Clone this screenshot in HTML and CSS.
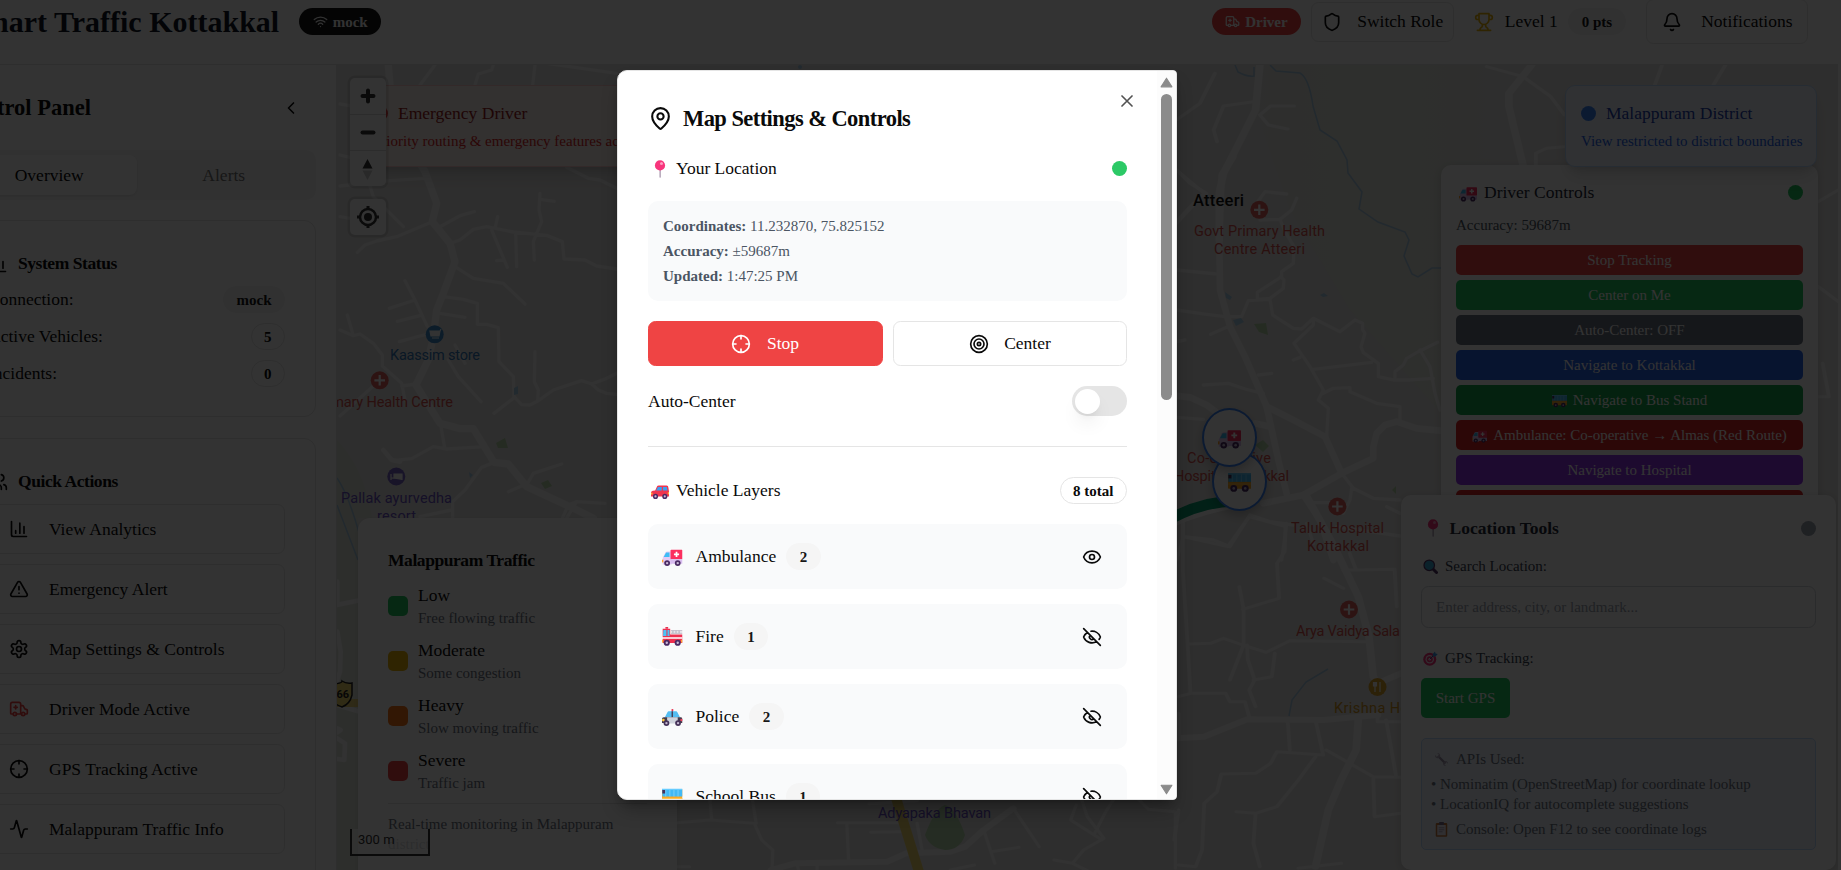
FILE: index.html
```html
<!DOCTYPE html>
<html lang="en">
<head>
<meta charset="utf-8">
<title>Smart Traffic Kottakkal</title>
<link rel="stylesheet" href="styles.css">
</head>
<body>
<svg class="defs" aria-hidden="true">
  <symbol id="e-pin" viewBox="0 0 60 60"><rect x="28" y="26" width="5" height="33" rx="2" fill="#b4a5b8"/><circle cx="30" cy="18" r="17" fill="#f8357c"/><circle cx="35" cy="12" r="5" fill="#ff9ac0"/></symbol>
  <symbol id="e-ambulance" viewBox="0 0 60 60"><path d="M2 52V35L10 19Q12 16 16 16H28V54H2Z" fill="#e3c9f5"/><path d="M5 32L12 19H22V32Z" fill="#3dbdf5"/><rect x="25" y="11" width="35" height="28" rx="2" fill="#fb2f5f"/><path d="M25 39H60V52H25Z" fill="#d9bdf0"/><path d="M40 17h5v5h5v5h-5v5h-5v-5h-5v-5h5z" fill="#fff"/><rect x="0" y="40" width="4" height="8" fill="#ffa42e"/><g fill="#4a2a63"><circle cx="15" cy="50" r="8.500"/><circle cx="46" cy="50" r="8.500"/></g><g fill="#c9b8d6"><circle cx="15" cy="50" r="3.500"/><circle cx="46" cy="50" r="3.500"/></g></symbol>
  <symbol id="e-fire" viewBox="0 0 60 60"><path d="M10 3h8v5h-8z" fill="#e73350"/><path d="M2 8H24V25H60V50H2Z" fill="#ee2f4f"/><path d="M4 12H13V29H3ZM16 12H22V29H16Z" fill="#4cc3f7"/><path d="M0 33H60V37H0Z" fill="#fff"/><path d="M26 14H60M26 21H60M32 14V21M41 14V21M50 14V21" stroke="#a9a1b3" stroke-width="2.5"/><path d="M0 40h4v8H0zM56 40h4v8h-4z" fill="#ffb02e"/><g fill="#4a2a63"><circle cx="14" cy="49" r="9"/><circle cx="46" cy="49" r="9"/></g><g fill="#c9b8d6"><circle cx="14" cy="49" r="3.5"/><circle cx="46" cy="49" r="3.5"/></g></symbol>
  <symbol id="e-police" viewBox="0 0 60 60"><rect x="28" y="9" width="5" height="7" fill="#e73350"/><path d="M8 34L16 18Q17 15 20 15H41Q44 15 45 18L53 34Z" fill="#54bdf2"/><path d="M28 15h4v20h-4z" fill="#453b4f"/><path d="M0 38Q0 33 5 33H55Q60 33 60 39V50H0Z" fill="#443c4d"/><path d="M15 33H46V51H15Z" fill="#cfd3dc"/><circle cx="4" cy="41" r="4" fill="#ffc83d"/><circle cx="57" cy="41" r="3.5" fill="#f0405c"/><g fill="#453258"><circle cx="13" cy="50" r="8.500"/><circle cx="47" cy="50" r="8.500"/></g><g fill="#c3b6cf"><circle cx="13" cy="50" r="3.5"/><circle cx="47" cy="50" r="3.5"/></g></symbol>
  <symbol id="e-bus" viewBox="0 0 60 60"><path d="M0 10H60V49H2Q0 49 0 45Z" fill="#f9a825"/><path d="M1 10H60V31H1Z" fill="#41b9f5"/><path d="M11 10V31M23 10V31M35 10V31M47 10V31" stroke="#8fd8fb" stroke-width="2"/><path d="M1 12H9V22H1Z" fill="#46315c"/><path d="M0 8H60V12H0Z" fill="#66ccff"/><path d="M0 35H60V38H0Z" fill="#ffc24a"/><g fill="#4a2a63"><circle cx="15" cy="48" r="9"/><circle cx="45" cy="48" r="9"/></g><g fill="#c9b8d6"><circle cx="15" cy="48" r="3.5"/><circle cx="45" cy="48" r="3.5"/></g></symbol>
  <symbol id="e-car" viewBox="0 0 60 60"><path d="M0 36Q0 30 6 29L14 28L20 15Q21 12 26 12H52Q58 12 58 19L60 32V48H0Z" fill="#f0354f"/><path d="M17 28L23 17H36V28ZM40 17H53L55 28H40Z" fill="#3d9ff0"/><path d="M0 36h5v6H0zM56 34h4v7h-4z" fill="#ffb62e"/><g fill="#4a2a63"><circle cx="15" cy="48" r="8.500"/><circle cx="46" cy="48" r="8.500"/></g><g fill="#c9b8d6"><circle cx="15" cy="48" r="3.5"/><circle cx="46" cy="48" r="3.5"/></g></symbol>
  <symbol id="e-search" viewBox="0 0 60 60"><path d="M39 39L54 54" stroke="#533566" stroke-width="12" stroke-linecap="round"/><circle cx="25" cy="25" r="21" fill="#38a9d8" stroke="#533566" stroke-width="5"/></symbol>
  <symbol id="e-target" viewBox="0 0 60 60"><circle cx="27" cy="33" r="26" fill="#f8357c"/><circle cx="27" cy="33" r="17" fill="#f4e8f2"/><circle cx="27" cy="33" r="12" fill="#f8357c"/><circle cx="27" cy="33" r="5" fill="#fff"/><path d="M27 33L44 16" stroke="#2e5f9e" stroke-width="4"/><path d="M39 12L48 2L50 10L59 12L50 22H40Z" fill="#3c9be8"/></symbol>
  <symbol id="e-wrench" viewBox="0 0 60 60"><path d="M16 16L46 46" stroke="#9d92a8" stroke-width="9"/><path d="M4 12L12 20L20 12L13 4Q24 3 25 14Q23 26 12 25Q3 22 4 12M56 47L48 40L41 48L48 56Q37 56 36 46Q38 35 49 36Q57 39 56 47" fill="#b5abc0"/></symbol>
  <symbol id="e-clip" viewBox="0 0 60 60"><rect x="7" y="4" width="46" height="55" rx="4" fill="#c87a3f"/><rect x="13" y="12" width="34" height="41" fill="#efe9f3"/><rect x="20" y="0" width="20" height="12" rx="3" fill="#7d718b"/><path d="M19 23H41M19 31H41M19 39H34" stroke="#9c90a8" stroke-width="3"/></symbol>

  <symbol id="i-wifi" viewBox="0 0 24 24"><path d="M12 20h.01M2 8.82a15 15 0 0 1 20 0M5 12.859a10 10 0 0 1 14 0M8.5 16.429a5 5 0 0 1 7 0"/></symbol>
  <symbol id="i-amb" viewBox="0 0 24 24"><path d="M10 10H6M14 18V6a2 2 0 0 0-2-2H4a2 2 0 0 0-2 2v11a1 1 0 0 0 1 1h2M19 18h2a1 1 0 0 0 1-1v-3.28a1 1 0 0 0-.684-.948l-1.923-.641a1 1 0 0 1-.578-.502l-1.539-3.076A1 1 0 0 0 16.382 8H14M8 8v4M9 18h6"/><circle cx="17" cy="18" r="2"/><circle cx="7" cy="18" r="2"/></symbol>
  <symbol id="i-shield" viewBox="0 0 24 24"><path d="M20 13c0 5-3.5 7.5-7.66 8.95a1 1 0 0 1-.67-.01C7.5 20.5 4 18 4 13V6a1 1 0 0 1 1-1c2 0 4.5-1.2 6.24-2.72a1.17 1.17 0 0 1 1.52 0C14.51 3.81 17 5 19 5a1 1 0 0 1 1 1z"/></symbol>
  <symbol id="i-trophy" viewBox="0 0 24 24"><path d="M6 9H4.5a2.500 2.500 0 0 1 0-5H6M18 9h1.500a2.500 2.500 0 0 0 0-5H18M4 22h16M10 14.660V17c0 .55-.47.98-.97 1.210C7.850 18.750 7 20.240 7 22M14 14.660V17c0 .55.47.98.97 1.210C16.150 18.750 17 20.240 17 22M18 2H6v7a6 6 0 0 0 12 0V2Z"/></symbol>
  <symbol id="i-bell" viewBox="0 0 24 24"><path d="M10.268 21a2 2 0 0 0 3.464 0M3.262 15.326A1 1 0 0 0 4 17h16a1 1 0 0 0 .74-1.673C19.410 13.956 18 12.499 18 8A6 6 0 0 0 6 8c0 4.499-1.411 5.956-2.738 7.326"/></symbol>
  <symbol id="i-left" viewBox="0 0 24 24"><path d="m15 18-6-6 6-6"/></symbol>
  <symbol id="i-chart" viewBox="0 0 24 24"><path d="M3 3v16a2 2 0 0 0 2 2h16M18 17V9M13 17V5M8 17v-3"/></symbol>
  <symbol id="i-users" viewBox="0 0 24 24"><path d="M16 21v-2a4 4 0 0 0-4-4H6a4 4 0 0 0-4 4v2M22 21v-2a4 4 0 0 0-3-3.870M16 3.130a4 4 0 0 1 0 7.750"/><circle cx="9" cy="7" r="4"/></symbol>
  <symbol id="i-alert" viewBox="0 0 24 24"><path d="m21.730 18-8-14a2 2 0 0 0-3.480 0l-8 14A2 2 0 0 0 4 21h16a2 2 0 0 0 1.730-3M12 9v4M12 17h.01"/></symbol>
  <symbol id="i-gear" viewBox="0 0 24 24"><path d="M12.220 2h-.44a2 2 0 0 0-2 2v.18a2 2 0 0 1-1 1.730l-.43.25a2 2 0 0 1-2 0l-.15-.08a2 2 0 0 0-2.730.73l-.22.38a2 2 0 0 0 .73 2.730l.15.1a2 2 0 0 1 1 1.720v.51a2 2 0 0 1-1 1.740l-.15.09a2 2 0 0 0-.73 2.730l.22.38a2 2 0 0 0 2.730.73l.15-.08a2 2 0 0 1 2 0l.43.25a2 2 0 0 1 1 1.730V20a2 2 0 0 0 2 2h.44a2 2 0 0 0 2-2v-.18a2 2 0 0 1 1-1.730l.43-.25a2 2 0 0 1 2 0l.15.08a2 2 0 0 0 2.730-.73l.22-.39a2 2 0 0 0-.73-2.730l-.15-.08a2 2 0 0 1-1-1.740v-.5a2 2 0 0 1 1-1.740l.15-.09a2 2 0 0 0 .73-2.730l-.22-.38a2 2 0 0 0-2.730-.73l-.15.08a2 2 0 0 1-2 0l-.43-.25a2 2 0 0 1-1-1.730V4a2 2 0 0 0-2-2z"/><circle cx="12" cy="12" r="3"/></symbol>
  <symbol id="i-cross" viewBox="0 0 24 24"><circle cx="12" cy="12" r="10"/><path d="M22 12h-4M6 12H2M12 6V2M12 22v-4"/></symbol>
  <symbol id="i-pulse" viewBox="0 0 24 24"><path d="M22 12h-2.480a2 2 0 0 0-1.930 1.460l-2.350 8.360a.25.25 0 0 1-.48 0L9.240 2.180a.25.25 0 0 0-.48 0l-2.350 8.360A2 2 0 0 1 4.490 12H2"/></symbol>
  <symbol id="i-mappin" viewBox="0 0 24 24"><path d="M20 10c0 4.993-5.539 10.193-7.399 11.799a1 1 0 0 1-1.202 0C9.539 20.193 4 14.993 4 10a8 8 0 0 1 16 0"/><circle cx="12" cy="10" r="3"/></symbol>
  <symbol id="i-target" viewBox="0 0 24 24"><circle cx="12" cy="12" r="10"/><circle cx="12" cy="12" r="6"/><circle cx="12" cy="12" r="2"/></symbol>
  <symbol id="i-eye" viewBox="0 0 24 24"><path d="M2.062 12.348a1 1 0 0 1 0-.696 10.750 10.750 0 0 1 19.876 0 1 1 0 0 1 0 .696 10.750 10.750 0 0 1-19.876 0"/><circle cx="12" cy="12" r="3"/></symbol>
  <symbol id="i-eyeoff" viewBox="0 0 24 24"><path d="M10.733 5.076a10.744 10.744 0 0 1 11.205 6.575 1 1 0 0 1 0 .696 10.747 10.747 0 0 1-1.444 2.490M14.084 14.158a3 3 0 0 1-4.242-4.242M17.479 17.499a10.750 10.750 0 0 1-15.417-5.151 1 1 0 0 1 0-.696 10.750 10.750 0 0 1 4.446-5.143M2 2l20 20"/></symbol>
  <symbol id="i-x" viewBox="0 0 24 24"><path d="M18 6 6 18M6 6l12 12"/></symbol>
</svg>

<div class="app">
  <header class="top">
    <div class="brand">
      <h1>Smart Traffic Kottakkal</h1>
      <span class="badge dark"><svg class="ic xs"><use href="#i-wifi"/></svg>mock</span>
    </div>
    <div class="top-right">
      <div class="role">
        <span class="badge red"><svg class="ic xs"><use href="#i-amb"/></svg>Driver</span>
        <button class="btn sw"><svg class="ic"><use href="#i-shield"/></svg>Switch Role</button>
      </div>
      <div class="level"><svg class="ic gold"><use href="#i-trophy"/></svg><span class="lvl">Level 1</span><span class="badge soft">0 pts</span></div>
      <button class="btn notif"><svg class="ic"><use href="#i-bell"/></svg>Notifications</button>
    </div>
  </header>

  <div class="main">
    <aside class="side">
      <div class="side-head"><h2>Control Panel</h2><svg class="ic"><use href="#i-left"/></svg></div>
      <div class="tabs"><span class="tab on">Overview</span><span class="tab">Alerts</span></div>
      <section class="card">
        <h3><svg class="ic"><use href="#i-chart"/></svg>System Status</h3>
        <div class="stat"><span>Connection:</span><span class="badge soft">mock</span></div>
        <div class="stat"><span>Active Vehicles:</span><span class="badge line">5</span></div>
        <div class="stat"><span>Incidents:</span><span class="badge line">0</span></div>
      </section>
      <section class="card">
        <h3><svg class="ic"><use href="#i-users"/></svg>Quick Actions</h3>
        <div class="acts">
          <button class="act"><svg class="ic"><use href="#i-chart"/></svg>View Analytics</button>
          <button class="act"><svg class="ic"><use href="#i-alert"/></svg>Emergency Alert</button>
          <button class="act"><svg class="ic"><use href="#i-gear"/></svg>Map Settings &amp; Controls</button>
          <button class="act"><svg class="ic crimson"><use href="#i-amb"/></svg>Driver Mode Active</button>
          <button class="act"><svg class="ic"><use href="#i-cross"/></svg>GPS Tracking Active</button>
          <button class="act"><svg class="ic"><use href="#i-pulse"/></svg>Malappuram Traffic Info</button>
        </div>
      </section>
    </aside>

    <div class="map">
      <svg class="canvas" viewBox="337 65 1501 805" width="1501" height="805">
        <defs>
          <linearGradient id="park" x1="0" x2="1"><stop offset="0" stop-color="#e4e8de" stop-opacity="0"/><stop offset=".35" stop-color="#e4e8de"/><stop offset=".7" stop-color="#e4e8de"/><stop offset="1" stop-color="#e4e8de" stop-opacity="0"/></linearGradient>
        </defs>
        <path d="M1240 65H1500V480L1350 310L1290 210Z" fill="url(#park)"/>
        <path d="M337 440Q365 470 372 518H358V870H337Z" fill="#e0e6dc"/>
        <g class="roads" transform="translate(340 60) scale(.33333)">
          <g stroke-width="22"><path d="M144 5L150 75L190 230L255 335L290 430L277 485L330 550L345 605L310 700L290 750L280 830L265 900L228 975L300 1090L360 1106L400 1106L462 1207L505 1212L560 1280L700 1345L760 1375"/></g>
          <g stroke-width="10">
            <path d="M285 15L240 75M460 15L455 30L415 42L405 75M585 15L578 75M620 10L830 40"/>
            <path d="M0 378L55 372L150 362L255 355M90 378L100 410L190 500M52 577L75 555L110 543L170 530L277 485M300 500L360 467L403 455M330 550L360 540L400 508L440 500L520 516L620 526L667 545L672 597L735 600L770 618L830 627M455 510L502 622M473 470L465 505M470 602L490 600M600 400L597 450L605 485L590 520L580 545L583 600M600 418L643 424M527 520L530 620M345 620L400 655L490 670L555 732M310 710L370 718L412 730L412 793L440 793L475 803L477 905L520 950L522 1010L545 1034L570 1035L595 1022L640 990L725 962L755 972L800 955L830 940M585 875L583 965L595 990L593 1022M755 972L775 990L800 1000L830 1003M520 1015L462 1060M195 662L225 720L148 745M225 720L262 800M240 767L172 784M300 760L375 772M262 822L178 845M325 900L355 950L423 1025M345 855L375 910M0 810L40 827L60 822L100 850L127 885L127 918L185 970L195 1020M22 765L40 827M185 978L228 972M0 1068L120 960M302 1095L314 1163M130 1170L158 1202L215 1196L280 1160L320 1167L435 1160M455 1210L425 1222L375 1290L338 1325V1372M560 1275L580 1240L665 1212M505 1295L552 1275M668 1372L685 1335L710 1325L795 1330M640 1440L710 1325M680 322L745 355L780 360L830 385M0 132L30 137M0 285L30 292M0 470L30 475"/>
            <path d="M240 1370L335 1350"/>
          </g>
        </g>
        <g class="roads" transform="translate(0 435) scale(.33333)" stroke-width="14"><path d="M1150 45L1175 75L1200 80M1011 510L1072 497M1012 440V505M1012 590L1022 650L1020 710L1010 740M1011 810L1072 828M1012 910L1035 925L1033 975L1012 972M1012 880L1022 885L1012 892"/></g>
        <g class="roads" transform="translate(1170 160) scale(.33333)">
          <g stroke-width="20"><path d="M190 -10L155 45L148 240L150 390L180 500L225 590L290 740L325 900L350 1000"/><path d="M0 705L60 712L110 735L150 765M290 740L370 780L465 830L515 940M255 790L300 800M280 1030L400 1005L515 940L610 895V860L620 820L645 795L680 785L740 805L810 812M400 1005L450 1080L490 1200"/></g>
          <g stroke-width="10"><path d="M20 30L60 70L110 100M0 205L70 130M260 130L285 95L350 102M380 115L365 150L330 178L270 180M330 178L345 215L372 260L370 310L335 335V350L262 397V418L300 415L340 385L342 360L332 350M20 330L140 342M20 450L110 463L165 470H215L235 422L300 418L308 465L370 505L395 507L430 475L510 515L555 480L578 490V510L585 520L573 560L580 578L625 610V650L670 660H715L790 655M430 478V495L372 550L420 620L460 690L445 720L475 745L470 830M370 600L390 592M430 628L605 607M122 523L180 497M20 545L45 540M265 645L305 640M100 675L175 670L235 690L280 700M20 772L100 778M460 700L490 685L540 683V695L620 730L690 740V785M675 655V635L700 615L710 595L745 575L803 547M750 570L780 620L795 700L810 750M515 940L550 985L610 1015L690 1020M545 985L540 1020L520 1060M430 1028H490M650 1040L690 1060M350 1090L335 1200M240 1065L180 1160L130 1140L40 1130V1090M240 1065L300 1085L370 1095M40 1130L20 1200M410 1090L430 1150M500 1100L690 1128"/></g>
        </g>
        <g class="roads" transform="translate(1170 0) scale(.4279 .33333)">
          <g stroke-width="18"><path d="M210 195L200 330L165 420L125 520L115 580V720M845 195L792 280V320L825 495"/></g>
          <g stroke-width="9"><path d="M105 220L70 310L15 360M195 305L125 318L102 390L110 425M210 345L235 318H290M210 345L230 375L275 387M740 200L825 230L890 290L922 345M1150 195L1133 255M1298 195L1270 255M855 495V460L880 445L922 440M15 510L80 580L15 670M1515 605L1562 570M1515 860L1562 905M1525 1090L1540 1190H1515"/></g>
        </g>
        <g class="roads" transform="translate(1170 490) scale(.4279 .33333)">
          <g stroke-width="18"><path d="M320 20L380 160L440 320L465 440L475 560L485 580M15 745L80 740L180 688L360 690L485 675M485 580L540 550M440 690L435 780L400 870L370 960L340 1130"/></g>
          <g stroke-width="9"><path d="M30 95V240L40 440L48 610L20 620M30 140L135 170L185 80L270 110L268 185L250 220L255 325L170 358M162 290L172 358V465L140 570M45 462L95 460L125 445L170 465L225 487L280 452L460 455M180 465L182 510L198 570L185 600L200 650M245 490L238 560L195 570M48 610H130L140 635H175L185 680M275 690L280 780M340 690L358 795L250 785L235 820L200 850L120 852L110 905L80 940L75 1080L60 1130L20 1125M340 800L300 870L250 950L200 970L155 965M200 970L195 1060L210 1130M365 780L475 860L540 862M475 860L478 980L540 970M505 690L528 855M405 240L435 240L525 238L530 350M360 265L405 295M420 190L435 240M485 685V695H540M20 740V670M20 960L10 1050M300 1135L400 1120"/></g>
        </g>
        <g class="roads" transform="translate(610 450) scale(.37 .33333)">
          <g stroke-width="18"><path d="M435 1260L500 1240L750 1235L800 1210L920 1205L960 1190L1010 1140L1090 1075"/></g>
          <g stroke-width="9"><path d="M180 1118L270 1110L390 1120L410 1170L440 1200L438 1260M270 1050L275 1110M385 1050L395 1120M615 1118H800M640 1118L645 1235M705 1147L785 1145M830 1120L845 1210M1090 1075L1160 1190M1010 1140L1040 1240M1030 1205L1105 1192M1275 1050L1290 1100L1335 1165L1280 1200L1250 1240L1200 1230M1260 1065L1245 1110L1330 1170M1360 1050L1340 1085L1310 1150M1430 1050L1455 1078L1528 1085V1255M1250 1240L1290 1262M180 1250H215M920 1260L985 1245M505 1240L510 1262M560 1240V1262M700 1062L830 1052"/></g>
        </g>
        <path d="M896 798L919 872" stroke="#f1d76c" stroke-width="10" fill="none"/>
        <path d="M925 835Q935 808 945 805Q956 808 965 835Q960 850 945 850Q930 848 925 835Z" fill="#b9dcae"/>
        <path d="M337 703H358" stroke="#e9cf72" stroke-width="8"/>
        <g fill="#b7d8ac"><path d="M496 443L505 438L508 448L498 448ZM541 483L548 480L552 486L545 489ZM1254 324L1266 323L1268 335L1259 332ZM1392 490l4-4v8zM1255 445l8-5 6 6-6 6z"/></g>
        <g fill="#a9d0ec"><path d="M514 388l4-2v8l-4 1zM469 472l4 3-3 3zM1225 292l7 5-2 3-4-2zM1233 320l8-2 3 4-8 4zM1320 295l4-2 4 3-5 1z"/><circle cx="800" cy="67" r="2"/></g>
        <g fill="none" stroke="#a9cbe6" stroke-width="1.500"><path d="M337 478Q352 500 366 560M337 505L358 560M1235 65L1238 72Q1247 77 1254 76V67M1270 65L1276 71L1300 73Q1309 78 1313 106L1320 130L1337 141L1347 160L1348 173L1362 192L1359 209L1378 222L1405 232L1409 240L1404 256L1412 274L1418 277L1432 268L1441 268M1328 669L1306 682L1292 700L1289 716"/></g>
        <path d="M1170 520Q1205 505 1240 500" stroke="#fff" stroke-width="15" fill="none"/>
        <path d="M1170 519Q1205 500 1240 501" stroke="#0aa173" stroke-width="11" fill="none"/>
        <g class="dots">
          <g fill="#e0605c"><circle cx="379.700" cy="380.300" r="9"/><circle cx="1259.300" cy="209.800" r="9"/><circle cx="1337.400" cy="506.500" r="9"/><circle cx="1349" cy="609.500" r="9"/></g>
          <circle cx="434.700" cy="334.300" r="9" fill="#3f8ccc"/><circle cx="396.300" cy="476.500" r="9" fill="#7a66c8"/><circle cx="1377.500" cy="687" r="9" fill="#dca32c"/>
          <path d="M379.700 375v10.600M374.400 380.300H385M1259.300 204.500v10.600M1254 209.800h10.600M1337.400 501.200v10.600M1332.100 506.500h10.600M1349 604.200v10.600M1343.700 609.500h10.600" stroke="#fff" stroke-width="2.200"/>
          <path d="M430 331h10l-1 5h-8zM432 338h7M440 331l1-2M1375 682v10M1380 682v10M1373.500 682v4h3v-4M391 474v6M391 478h11v2M394 474h8v4h-8z" fill="#fff" stroke="#fff" stroke-width="1.200"/>
        </g>
        <g class="poi">
          <g fill="#d8524d"><text x="453" y="407" text-anchor="end" textLength="139">Primary Health Centre</text><text x="1194" y="236" textLength="131">Govt Primary Health</text><text x="1214" y="254" textLength="91">Centre Atteeri</text><text x="1187" y="463" textLength="84">Co-operative</text><text x="1174" y="481" textLength="115">Hospital Kottakkal</text><text x="1291" y="533" textLength="93">Taluk Hospital</text><text x="1307" y="551" textLength="62">Kottakkal</text><text x="1296" y="636" textLength="104">Arya Vaidya Sala</text></g>
          <text x="390" y="360" textLength="90" fill="#3278ba">Kaassim store</text>
          <g fill="#6a51c4"><text x="341" y="503" textLength="111">Pallak ayurvedha</text><text x="377" y="521" textLength="39">resort</text><text x="878" y="818" textLength="113">Adyapaka Bhavan</text></g>
          <text x="1334" y="713" textLength="92" fill="#d0951f">Krishna Hotel</text>
          <text class="place" x="1193" y="206" textLength="51">Atteeri</text>
        </g>
        <path d="M330 684Q342 684 342 681Q346 684 352 683V695Q350 704 342 707Q334 704 331 700Z" fill="#f1d76c" stroke="#222" stroke-width="1.500"/>
        <text class="shield" x="336.500" y="698">66</text>
      </svg>

      <div class="marker bus"><svg><use href="#e-bus"/></svg></div>
      <div class="marker amb"><svg><use href="#e-ambulance"/></svg></div>

      <div class="note driver"><div class="note-t"><i class="dot"></i>Emergency Driver</div><p>Priority routing &amp; emergency features activated</p></div>

      <div class="ctl zoom">
        <span><svg viewBox="0 0 36 36"><path d="M18 12.500v11M12.500 18h11" stroke="#333" stroke-width="4" stroke-linecap="round"/></svg></span>
        <span><svg viewBox="0 0 36 36"><path d="M12.500 17.500h11" stroke="#333" stroke-width="4" stroke-linecap="round"/></svg></span>
        <span><svg viewBox="0 0 36 36"><path d="M17.500 8L22.500 17.500h-10z" fill="#333"/><path d="M17.500 29L22.500 19.500h-10z" fill="#ccc"/></svg></span>
      </div>
      <div class="ctl locate"><span><svg viewBox="0 0 36 36"><circle cx="18" cy="18" r="8" fill="none" stroke="#333" stroke-width="2.500"/><circle cx="18" cy="18" r="4" fill="#333"/><path d="M18 7v3M18 26v3M7 18h3M26 18h3" stroke="#333" stroke-width="3"/></svg></span></div>

      <div class="legend">
        <h3>Malappuram Traffic</h3>
        <div class="lv"><i class="g"></i><div><b>Low</b><small>Free flowing traffic</small></div></div>
        <div class="lv"><i class="y"></i><div><b>Moderate</b><small>Some congestion</small></div></div>
        <div class="lv"><i class="o"></i><div><b>Heavy</b><small>Slow moving traffic</small></div></div>
        <div class="lv"><i class="r"></i><div><b>Severe</b><small>Traffic jam</small></div></div>
        <p>Real-time monitoring in Malappuram district</p>
      </div>
      <div class="scale">300 m</div>

      <div class="drive">
        <div class="drive-h"><svg><use href="#e-ambulance"/></svg><span>Driver Controls</span><i class="dot"></i></div>
        <p>Accuracy: 59687m</p>
        <div class="drive-b">
          <button class="c-red">Stop Tracking</button>
          <button class="c-green">Center on Me</button>
          <button class="c-gray">Auto-Center: OFF</button>
          <button class="c-blue">Navigate to Kottakkal</button>
          <button class="c-green2"><svg><use href="#e-bus"/></svg>Navigate to Bus Stand</button>
          <button class="c-red2"><svg><use href="#e-ambulance"/></svg>Ambulance: Co-operative → Almas (Red Route)</button>
          <button class="c-purple">Navigate to Hospital</button>
          <button class="c-red2"></button>
        </div>
      </div>
      <div class="note district"><div class="note-t"><i class="dot"></i>Malappuram District</div><p>View restricted to district boundaries</p></div>

      <div class="tools">
        <div class="tools-h"><svg><use href="#e-pin"/></svg><b>Location Tools</b><i class="dot"></i></div>
        <div class="lab"><svg><use href="#e-search"/></svg>Search Location:</div>
        <div class="field">Enter address, city, or landmark...</div>
        <div class="lab second"><svg><use href="#e-target"/></svg>GPS Tracking:</div>
        <button class="gps">Start GPS</button>
        <div class="apis">
          <div class="em"><svg><use href="#e-wrench"/></svg>APIs Used:</div>
          <div>• Nominatim (OpenStreetMap) for coordinate lookup</div>
          <div>• LocationIQ for autocomplete suggestions</div>
          <div class="em last"><svg><use href="#e-clip"/></svg>Console: Open F12 to see coordinate logs</div>
        </div>
      </div>
    </div>
  </div>
</div>

<div class="overlay"></div>

<div class="dialog" role="dialog">
  <div class="dlg-body">
    <h2><svg class="ic lg"><use href="#i-mappin"/></svg>Map Settings &amp; Controls</h2>
    <svg class="ic close"><use href="#i-x"/></svg>
    <div class="row loc"><span class="emo"><svg><use href="#e-pin"/></svg>Your Location</span><i class="dot"></i></div>
    <div class="info">
      <div><b>Coordinates:</b> 11.232870, 75.825152</div>
      <div><b>Accuracy:</b> ±59687m</div>
      <div><b>Updated:</b> 1:47:25 PM</div>
    </div>
    <div class="pair">
      <button class="stop"><svg class="ic"><use href="#i-cross"/></svg>Stop</button>
      <button><svg class="ic"><use href="#i-target"/></svg>Center</button>
    </div>
    <div class="row auto"><span>Auto-Center</span><span class="switch"><i></i></span></div>
    <div class="sep"></div>
    <div class="row veh"><span class="emo"><svg><use href="#e-car"/></svg>Vehicle Layers</span><span class="badge line">8 total</span></div>
    <div class="layers">
      <div class="layer"><svg class="e"><use href="#e-ambulance"/></svg><span>Ambulance</span><span class="badge soft">2</span><svg class="ic end"><use href="#i-eye"/></svg></div>
      <div class="layer"><svg class="e"><use href="#e-fire"/></svg><span>Fire</span><span class="badge soft">1</span><svg class="ic end"><use href="#i-eyeoff"/></svg></div>
      <div class="layer"><svg class="e"><use href="#e-police"/></svg><span>Police</span><span class="badge soft">2</span><svg class="ic end"><use href="#i-eyeoff"/></svg></div>
      <div class="layer"><svg class="e"><use href="#e-bus"/></svg><span>School Bus</span><span class="badge soft">1</span><svg class="ic end"><use href="#i-eyeoff"/></svg></div>
    </div>
  </div>
  <div class="scroll">
    <svg viewBox="0 0 12 10"><path d="M6 1L11 9H1Z"/></svg>
    <i></i>
    <svg class="down" viewBox="0 0 12 10"><path d="M6 9L11 1H1Z"/></svg>
  </div>
</div>
</body>
</html>
```
FILE: styles.css
```css
* { box-sizing: border-box; }
html, body { margin: 0; height: 870px; overflow: hidden; background: #fff; }
body { font: 17.5px/25px "Liberation Serif", "Times New Roman", serif; color: #0a0a0a; position: relative; }
h1, h2, h3, p { margin: 0; }
button { font: inherit; color: inherit; background: none; border: 0; padding: 0; }
.defs { position: absolute; width: 0; height: 0; }
.ic { width: 20px; height: 20px; flex: none; fill: none; stroke: currentColor; stroke-width: 2; stroke-linecap: round; stroke-linejoin: round; }
.ic.xs { width: 15px; height: 15px; margin-right: 5px; }
.ic.lg { width: 25px; height: 25px; }
.dot { width: 15px; height: 15px; border-radius: 50%; flex: none; }

.badge { display: inline-flex; align-items: center; height: 27px; border-radius: 14px; border: 1px solid transparent; padding: 0 12.5px; font: bold 15px/20px "Liberation Serif", serif; white-space: nowrap; }
.badge.dark { background: #171717; color: #fafafa; }
.badge.red { background: #ef4444; color: #fafafa; }
.badge.soft { background: #f5f5f5; color: #171717; }
.badge.line { border-color: #e5e5e5; }

.app { margin: -21px 0 0 -63px; width: 1901px; height: 891px; display: flex; flex-direction: column; }
.top { height: 86px; flex: none; display: flex; justify-content: space-between; align-items: center; padding: 0 30px; border-bottom: 1px solid #e5e5e5; }
.brand { display: flex; align-items: center; gap: 20px; }
.brand h1 { font-size: 30px; line-height: 40px; color: #111827; white-space: nowrap; }
.top-right, .role, .level { display: flex; align-items: center; }
.top-right { gap: 20.500px; }
.role { gap: 10px; }
.level { gap: 10.500px; }
.gold { color: #eab308; }
.btn { display: flex; align-items: center; border: 1px solid #e5e5e5; border-radius: 7.500px; white-space: nowrap; }
.sw { height: 40px; padding: 0 9.500px; gap: 15.500px; }
.notif { height: 45px; padding: 0 14.500px; gap: 19.500px; }

.main { flex: 1; min-height: 0; display: flex; }
.side { width: 400px; flex: none; overflow: hidden; padding: 21px 20px 0 20px; border-right: 1px solid #e5e5e5; }
.side-head { display: flex; align-items: center; justify-content: space-between; height: 43px; padding-right: 15px; }
.side-head h2 { font-size: 22.500px; line-height: 30px; }
.tabs { margin-top: 21px; height: 50px; padding: 5px; display: flex; background: #f5f5f5; border-radius: 10px; }
.tab { flex: 1; display: flex; align-items: center; justify-content: center; color: #737373; border-radius: 7.500px; }
.tab.on { background: #fff; color: #0a0a0a; box-shadow: 0 1px 3px rgba(0,0,0,.1); }
.card { margin-top: 20px; border: 1px solid #e5e5e5; border-radius: 12px; padding: 29px 30px; }
.card + .card { margin-top: 21px; }
.card h3 { display: flex; align-items: center; gap: 10px; height: 27px; font-size: 17.500px; letter-spacing: -.4375px; }
.stat { display: flex; justify-content: space-between; align-items: center; height: 27px; margin-top: 10px; }
.stat:first-of-type { margin-top: 9px; }
.acts { display: flex; flex-direction: column; gap: 10px; margin-top: 9px; }
.act { height: 50px; flex: none; border: 1px solid #e5e5e5; border-radius: 7.500px; padding: 0 20px; display: flex; align-items: center; gap: 20px; }
.crimson { color: #ef4444; }

.map { position: relative; flex: 1; min-width: 0; background: #e6e5e4; overflow: hidden; }
.canvas { display: block; }
.roads { fill: none; stroke: #f8f8f8; stroke-linecap: round; stroke-linejoin: round; }
.poi { font: 14.500px Roboto, sans-serif; }
.poi .place { font-size: 16.500px; font-weight: 500; fill: #111; }
.shield { font: bold 11px Roboto, sans-serif; fill: #222; }
.marker { position: absolute; width: 55px; height: 59px; border: 2px solid #3b82f6; border-radius: 50%; background: #fff; display: flex; align-items: center; justify-content: center; box-shadow: 0 5px 10px rgba(0,0,0,.2); }
.marker svg { width: 23px; height: 23px; }
.marker.bus { left: 875px; top: 387px; }
.marker.amb { left: 865px; top: 343px; }

.note { position: absolute; top: 20px; height: 82px; padding: 15px 15px 14px; border: 1px solid; border-radius: 10px; box-shadow: 0 12px 18px -4px rgba(0,0,0,.12), 0 5px 8px -4px rgba(0,0,0,.12); white-space: nowrap; }
.note-t { display: flex; align-items: center; gap: 10px; }
.note p { font-size: 15px; line-height: 20px; margin-top: 5px; }
.driver { left: 20px; width: 360px; background: #fef2ee; border-color: #fecaca; color: #991b1b; }
.driver .dot { background: #ef4444; }
.driver p { color: #dc2626; }
.district { left: 1228px; width: 252px; background: #eff6ff; border-color: #bfdbfe; color: #1e40af; }
.district .dot { background: #3b82f6; }
.district p { color: #2563eb; }

.ctl { position: absolute; left: 13px; width: 36px; border-radius: 5px; background: #fff; box-shadow: 0 0 0 2.500px rgba(0,0,0,.1); }
.ctl span { display: block; height: 36px; }
.ctl span + span { border-top: 1px solid #ddd; }
.ctl svg { display: block; width: 36px; height: 36px; }
.zoom { top: 13px; }
.locate { top: 134px; }

.legend { position: absolute; left: 21px; top: 453px; width: 319px; height: 440px; padding: 30px; background: #fff; border-radius: 12px; box-shadow: 0 2px 5px rgba(0,0,0,.1); }
.legend h3 { font-size: 17.500px; line-height: 25px; letter-spacing: -.4375px; margin-bottom: 10px; }
.lv { display: flex; align-items: center; gap: 10px; height: 45px; margin-bottom: 10px; }
.lv i { width: 20px; height: 20px; border-radius: 5px; }
.lv b { display: block; font-weight: normal; line-height: 25px; }
.lv small { display: block; font-size: 15px; line-height: 20px; color: #6b7280; }
.g { background: #22c55e; } .y { background: #eab308; } .o { background: #f97316; } .r { background: #ef4444; }
.legend p { border-top: 1px solid #e5e5e5; padding-top: 10px; font-size: 15px; line-height: 20px; color: #6b7280; }
.scale { position: absolute; left: 13px; top: 764px; width: 80px; height: 27px; border: 2px solid #333; border-top: 0; background: rgba(255,255,255,.75); font: 13px/22px Roboto, sans-serif; padding-left: 6px; color: #333; }

.drive { position: absolute; left: 1104px; top: 100px; width: 377px; height: 400px; background: #fff; border-radius: 10px; padding: 15px; box-shadow: 0 2px 8px rgba(0,0,0,.15); }
.drive-h { display: flex; align-items: center; height: 25px; color: #1f2937; }
.drive-h svg { width: 18px; height: 18px; margin: 0 7.500px 0 2.500px; }
.drive-h .dot { margin-left: auto; background: #22c55e; }
.drive p { font-size: 15px; line-height: 20px; margin: 10px 0; color: #4b5563; }
.drive-b { display: flex; flex-direction: column; gap: 5px; }
.drive-b button { height: 30px; flex: none; border-radius: 5px; color: #fff; font-size: 15px; display: flex; align-items: center; justify-content: center; }
.drive-b svg { width: 15px; height: 15px; margin-right: 6px; }
.c-red { background: #ef4444; } .c-green { background: #22c55e; } .c-gray { background: #6b7280; } .c-blue { background: #2563eb; }
.c-green2 { background: #16a34a; } .c-red2 { background: #dc2626; } .c-purple { background: #9333ea; }

.tools { position: absolute; left: 1064px; top: 430px; width: 435px; height: 375px; background: #fff; border-radius: 10px; padding: 20px; box-shadow: 0 2px 8px rgba(0,0,0,.15); font-size: 15px; line-height: 20px; }
.tools-h { display: flex; align-items: center; height: 26px; font-size: 17.500px; color: #1f2937; }
.tools-h svg { width: 18px; height: 18px; margin: 0 7.500px 0 3px; }
.tools-h .dot { margin-left: auto; background: #9ca3af; }
.lab { display: flex; align-items: center; height: 20px; margin-top: 15px; color: #374151; }
.lab.second { margin-top: 20px; }
.lab svg { width: 15px; height: 15px; margin: 0 7px 0 2px; }
.field { margin-top: 10px; height: 42px; border: 1px solid #d1d5db; border-radius: 7.500px; padding: 10px 14px; color: #9ca3af; }
.gps { display: block; margin-top: 10px; width: 89px; height: 40px; border-radius: 5px; background: #22c55e; color: #fff; }
.apis { margin-top: 20px; height: 112px; border: 1px solid #bfdbfe; border-radius: 5px; background: #eff6ff; padding: 10px 9px; color: #6b7280; }
.apis .em { display: flex; align-items: center; margin-bottom: 5px; }
.apis .em.last { margin-top: 5px; }
.apis svg { width: 15px; height: 15px; margin: 0 7px 0 3px; }

.overlay { position: absolute; inset: 0; background: rgba(0,0,0,.8); }

.dialog { position: absolute; left: 617px; top: 70px; width: 560px; height: 730px; border: 1px solid #e5e5e5; border-radius: 10px 4px 4px 10px; background: #fff; overflow: hidden; display: flex; box-shadow: 0 12px 19px -4px rgba(0,0,0,.3), 0 5px 8px -5px rgba(0,0,0,.3); }
.dlg-body { position: relative; width: 539px; flex: none; padding: 35px 30px 0; }
.dlg-body h2 { display: flex; align-items: center; gap: 10px; font-size: 22.500px; line-height: 25px; letter-spacing: -.5625px; }
.close { position: absolute; left: 499px; top: 20px; opacity: .7; }
.row { display: flex; align-items: center; justify-content: space-between; }
.loc { margin-top: 25px; height: 25px; }
.loc .dot { background: #2cc966; }
.emo { display: flex; align-items: center; }
.emo svg { width: 18px; height: 18px; margin: 0 7px 0 3px; }
.info { margin-top: 20px; height: 100px; padding: 15px; background: #f9fafb; border-radius: 10px; color: #4b5563; font-size: 15px; line-height: 20px; display: flex; flex-direction: column; gap: 5px; }
.pair { margin-top: 20px; display: flex; gap: 10px; }
.pair button { flex: 1; height: 45px; border: 1px solid #e5e5e5; border-radius: 7.500px; display: flex; align-items: center; justify-content: center; gap: 15.500px; }
.pair .stop { background: #ef4444; border-color: #ef4444; color: #fff; }
.auto { margin-top: 20px; height: 30px; }
.switch { width: 55px; height: 30px; border-radius: 15px; background: #e5e5e5; padding: 2.500px; }
.switch i { display: block; width: 25px; height: 25px; border-radius: 50%; background: #fff; box-shadow: 0 12px 19px -4px rgba(0,0,0,.1), 0 5px 8px -5px rgba(0,0,0,.1); }
.sep { margin-top: 30px; height: 1px; background: #e5e5e5; }
.veh { margin-top: 30px; height: 27px; }
.layers { margin-top: 20px; display: flex; flex-direction: column; gap: 15px; }
.layer { height: 65px; flex: none; display: flex; align-items: center; gap: 10px; padding: 0 25px 0 14px; background: #f9fafb; border-radius: 10px; }
.layer .e { width: 20.500px; height: 20.500px; margin-right: 3px; }
.layer .end { margin-left: auto; }
.scroll { width: 19px; flex: none; background: #fcfcfc; display: flex; flex-direction: column; align-items: center; padding: 6px 0 4px; }
.scroll svg { width: 13px; height: 11px; fill: #8b8b8b; stroke: #8b8b8b; stroke-linejoin: round; }
.scroll i { width: 11px; height: 306px; margin-top: 6px; border-radius: 5.500px; background: #8b8b8b; }
.scroll .down { margin-top: auto; }
```
